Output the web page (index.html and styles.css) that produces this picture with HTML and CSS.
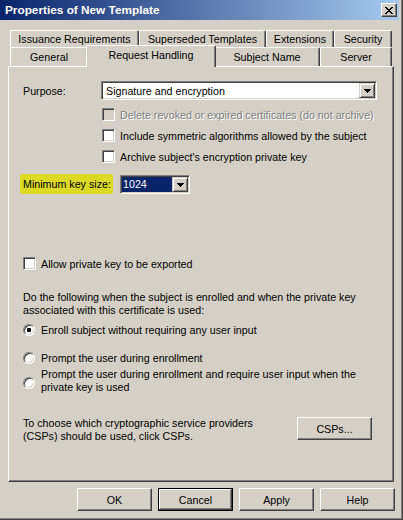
FILE: index.html
```html
<!DOCTYPE html>
<html>
<head>
<meta charset="utf-8">
<title>Properties of New Template</title>
<link rel="stylesheet" href="styles.css">
</head>
<body>
<div class="window">
  <div class="titlebar">
    <span class="title">Properties of New Template</span>
    <span class="close"><svg width="8" height="7" viewBox="0 0 8 7" shape-rendering="crispEdges"><path d="M0 0h2v1h-2z M6 0h2v1h-2z M1 1h2v1h-2z M5 1h2v1h-2z M2 2h4v1h-4z M3 3h2v1h-2z M2 4h4v1h-4z M1 5h2v1h-2z M5 5h2v1h-2z M0 6h2v1h-2z M6 6h2v1h-2z" fill="#000"/></svg></span>
  </div>
  <div class="tabs">
    <div class="tabrow back">
      <div class="tab t-iss">Issuance Requirements</div>
      <div class="tab t-sup">Superseded Templates</div>
      <div class="tab t-ext">Extensions</div>
      <div class="tab t-sec">Security</div>
    </div>
    <div class="tabrow front">
      <div class="tab t-gen">General</div>
      <div class="tab t-req selected">Request Handling</div>
      <div class="tab t-sub">Subject Name</div>
      <div class="tab t-srv">Server</div>
    </div>
  </div>
  <div class="panel">
    <div class="row purpose">
      <span class="lbl">Purpose:</span>
      <div class="combo wide">
        <span class="combo-text">Signature and encryption</span>
        <span class="drop"><svg width="7" height="4" viewBox="0 0 7 4" shape-rendering="crispEdges"><path d="M0 0h7v1h-7z M1 1h5v1h-5z M2 2h3v1h-3z M3 3h1v1h-1z" fill="#000"/></svg></span>
      </div>
    </div>
    <div class="checks">
      <div class="opt disabled"><span class="cb"></span><span class="txt">Delete revoked or expired certificates (do not archive)</span></div>
      <div class="opt"><span class="cb"></span><span class="txt">Include symmetric algorithms allowed by the subject</span></div>
      <div class="opt"><span class="cb"></span><span class="txt">Archive subject's encryption private key</span></div>
    </div>
    <div class="row keysize">
      <span class="hl">Minimum key size:</span>
      <div class="combo small">
        <span class="combo-text sel">1024</span>
        <span class="drop"><svg width="7" height="4" viewBox="0 0 7 4" shape-rendering="crispEdges"><path d="M0 0h7v1h-7z M1 1h5v1h-5z M2 2h3v1h-3z M3 3h1v1h-1z" fill="#000"/></svg></span>
      </div>
    </div>
    <div class="opt allow"><span class="cb"></span><span class="txt">Allow private key to be exported</span></div>
    <p class="para">Do the following when the subject is enrolled and when the private key<br>associated with this certificate is used:</p>
    <div class="opt radio r1"><span class="rb on"><span class="dot"></span></span><span class="txt">Enroll subject without requiring any user input</span></div>
    <div class="opt radio r2"><span class="rb"></span><span class="txt">Prompt the user during enrollment</span></div>
    <div class="opt radio r3"><span class="rb"></span><span class="txt">Prompt the user during enrollment and require user input when the<br>private key is used</span></div>
    <div class="csp">
      <p class="csp-text">To choose which cryptographic service providers<br>(CSPs) should be used, click CSPs.</p>
      <button class="btn csp-btn" type="button">CSPs...</button>
    </div>
  </div>
  <div class="buttons">
    <button class="btn" type="button">OK</button>
    <button class="btn default" type="button">Cancel</button>
    <button class="btn" type="button">Apply</button>
    <button class="btn" type="button">Help</button>
  </div>
</div>
</body>
</html>
```

FILE: styles.css
```css
* { box-sizing: border-box; }
html, body { margin: 0; padding: 0; }
body {
  width: 403px;
  height: 520px;
  overflow: hidden;
  background: #d4d0c8;
  font-family: "Liberation Sans", Arial, sans-serif;
  font-size: 10.7px;
  color: #000;
}
.window {
  width: 403px;
  height: 520px;
  background: #d4d0c8;
  border-right: 1px solid #404040;
  border-bottom: 1px solid #404040;
  box-shadow: inset -1px -1px #808080;
  padding-right: 3px;
}
.titlebar {
  height: 20px;
  display: flex;
  align-items: center;
  justify-content: space-between;
  background: linear-gradient(to right, #0a246a, #a6caf0);
  padding: 0 2px 0 5px;
}
.title {
  color: #fff;
  font-weight: bold;
  font-size: 11.8px;
  white-space: nowrap;
}
.close {
  width: 16px;
  height: 14px;
  display: flex;
  align-items: center;
  justify-content: center;
  background: #d4d0c8;
  border: 1px solid;
  border-color: #fff #404040 #404040 #fff;
  box-shadow: inset -1px -1px #808080, inset 1px 1px #d4d0c8;
}
.close svg { display: block; }

.tabs { margin-top: 10px; padding-left: 10px; }
.tabrow { display: flex; }
.tabrow.back { height: 17px; }
.tabrow.front { height: 19px; }
.tab {
  flex: none;
  height: 100%;
  background: #d4d0c8;
  border-top: 1px solid #fff;
  border-left: 1px solid #fff;
  border-right: 1px solid #404040;
  box-shadow: inset -1px 0 #808080;
  border-radius: 2px 2px 0 0;
  display: flex;
  align-items: center;
  justify-content: center;
  white-space: nowrap;
}
.t-iss { width: 129px; }
.t-sup { width: 127px; }
.t-ext { width: 68px; }
.t-sec { width: 58px; }
.t-gen { width: 78px; }
.t-req { width: 126px; }
.t-sub { width: 106px; }
.t-srv { width: 72px; }
.tab.selected {
  position: relative;
  z-index: 1;
  width: 130px;
  height: 22px;
  margin: -2px -2px 0;
  padding-bottom: 4px;
  box-shadow: inset -1px 0 #808080;
}

.panel {
  margin-left: 8px;
  width: 386px;
  height: 416px;
  border: 1px solid;
  border-color: #fff #404040 #404040 #fff;
  box-shadow: inset -1px -1px #808080;
  padding-left: 14px;
}
.row { display: flex; align-items: center; }
.purpose { margin-top: 14px; height: 19px; }
.lbl { width: 78px; flex: none; }
.combo {
  display: flex;
  height: 19px;
  background: #fff;
  border: 1px solid;
  border-color: #808080 #fff #fff #808080;
  box-shadow: inset 1px 1px #404040, inset -1px -1px #d4d0c8;
  padding: 1px;
}
.combo.wide { width: 276px; }
.combo.small { width: 70px; margin-left: 7px; }
.combo-text {
  flex: 1;
  display: flex;
  align-items: center;
  padding-left: 3px;
  white-space: nowrap;
}
.combo-text.sel {
  background: #0a246a;
  color: #fff;
  padding-left: 1px;
}
.drop {
  flex: none;
  width: 16px;
  height: 15px;
  display: flex;
  align-items: center;
  justify-content: center;
  background: #d4d0c8;
  border: 1px solid;
  border-color: #d4d0c8 #404040 #404040 #d4d0c8;
  box-shadow: inset 1px 1px #fff, inset -1px -1px #808080;
}
.drop svg { display: block; margin-top: 1px; }

.checks { margin-top: 4px; padding-left: 79px; }
.opt {
  display: flex;
  align-items: center;
  height: 21px;
  white-space: nowrap;
}
.cb {
  flex: none;
  width: 13px;
  height: 13px;
  margin-right: 5px;
  background: #fff;
  border: 1px solid;
  border-color: #808080 #fff #fff #808080;
  box-shadow: inset 1px 1px #404040, inset -1px -1px #d4d0c8;
}
.opt.disabled .cb { background: #d4d0c8; }
.opt.disabled .txt { color: #808080; text-shadow: 1px 1px 0 #fff; }

.keysize { margin-top: 7px; height: 20px; }
.hl {
  width: 93px;
  height: 20px;
  margin-left: -3px;
  padding-left: 3px;
  display: flex;
  align-items: center;
  background: #dcda24;
  border-radius: 2px;
  white-space: nowrap;
}

.allow { margin-top: 59px; }
.para {
  margin: 17px 0 0;
  line-height: 13px;
  white-space: nowrap;
}
.rb {
  flex: none;
  width: 12px;
  height: 12px;
  margin-right: 6px;
  border-radius: 50%;
  background: #fff;
  border: 1px solid;
  border-color: #808080 #fff #fff #808080;
  box-shadow: inset 1px 1px #404040, inset -1px -1px #d4d0c8;
  display: flex;
  align-items: center;
  justify-content: center;
}
.dot {
  width: 4px;
  height: 4px;
  border-radius: 1px;
  background: #000;
}
.r1 { margin-top: 2px; }
.r2 { margin-top: 7px; }
.r3 { height: 26px; line-height: 13px; }
.r3 .rb { margin-top: 3px; }

.csp {
  margin-top: 22px;
  display: flex;
  align-items: flex-start;
  justify-content: space-between;
  padding-right: 21px;
}
.csp-text {
  margin: 1px 0 0;
  line-height: 13px;
  white-space: nowrap;
}
.btn {
  width: 75px;
  height: 23px;
  margin: 0;
  padding: 0;
  font-family: "Liberation Sans", Arial, sans-serif;
  font-size: 10.7px;
  color: #000;
  background: #d4d0c8;
  border: 1px solid;
  border-color: #fff #404040 #404040 #fff;
  box-shadow: inset -1px -1px #808080, inset 1px 1px #d4d0c8;
  border-radius: 0;
}
.csp-btn { margin-top: 1px; }
.btn.default {
  border-color: #000;
  box-shadow: inset -1px -1px #404040, inset 1px 1px #fff, inset -2px -2px #808080, inset 2px 2px #d4d0c8;
}
.buttons {
  display: flex;
  justify-content: flex-end;
  gap: 6px;
  margin-top: 6px;
  padding-right: 4px;
}
```
